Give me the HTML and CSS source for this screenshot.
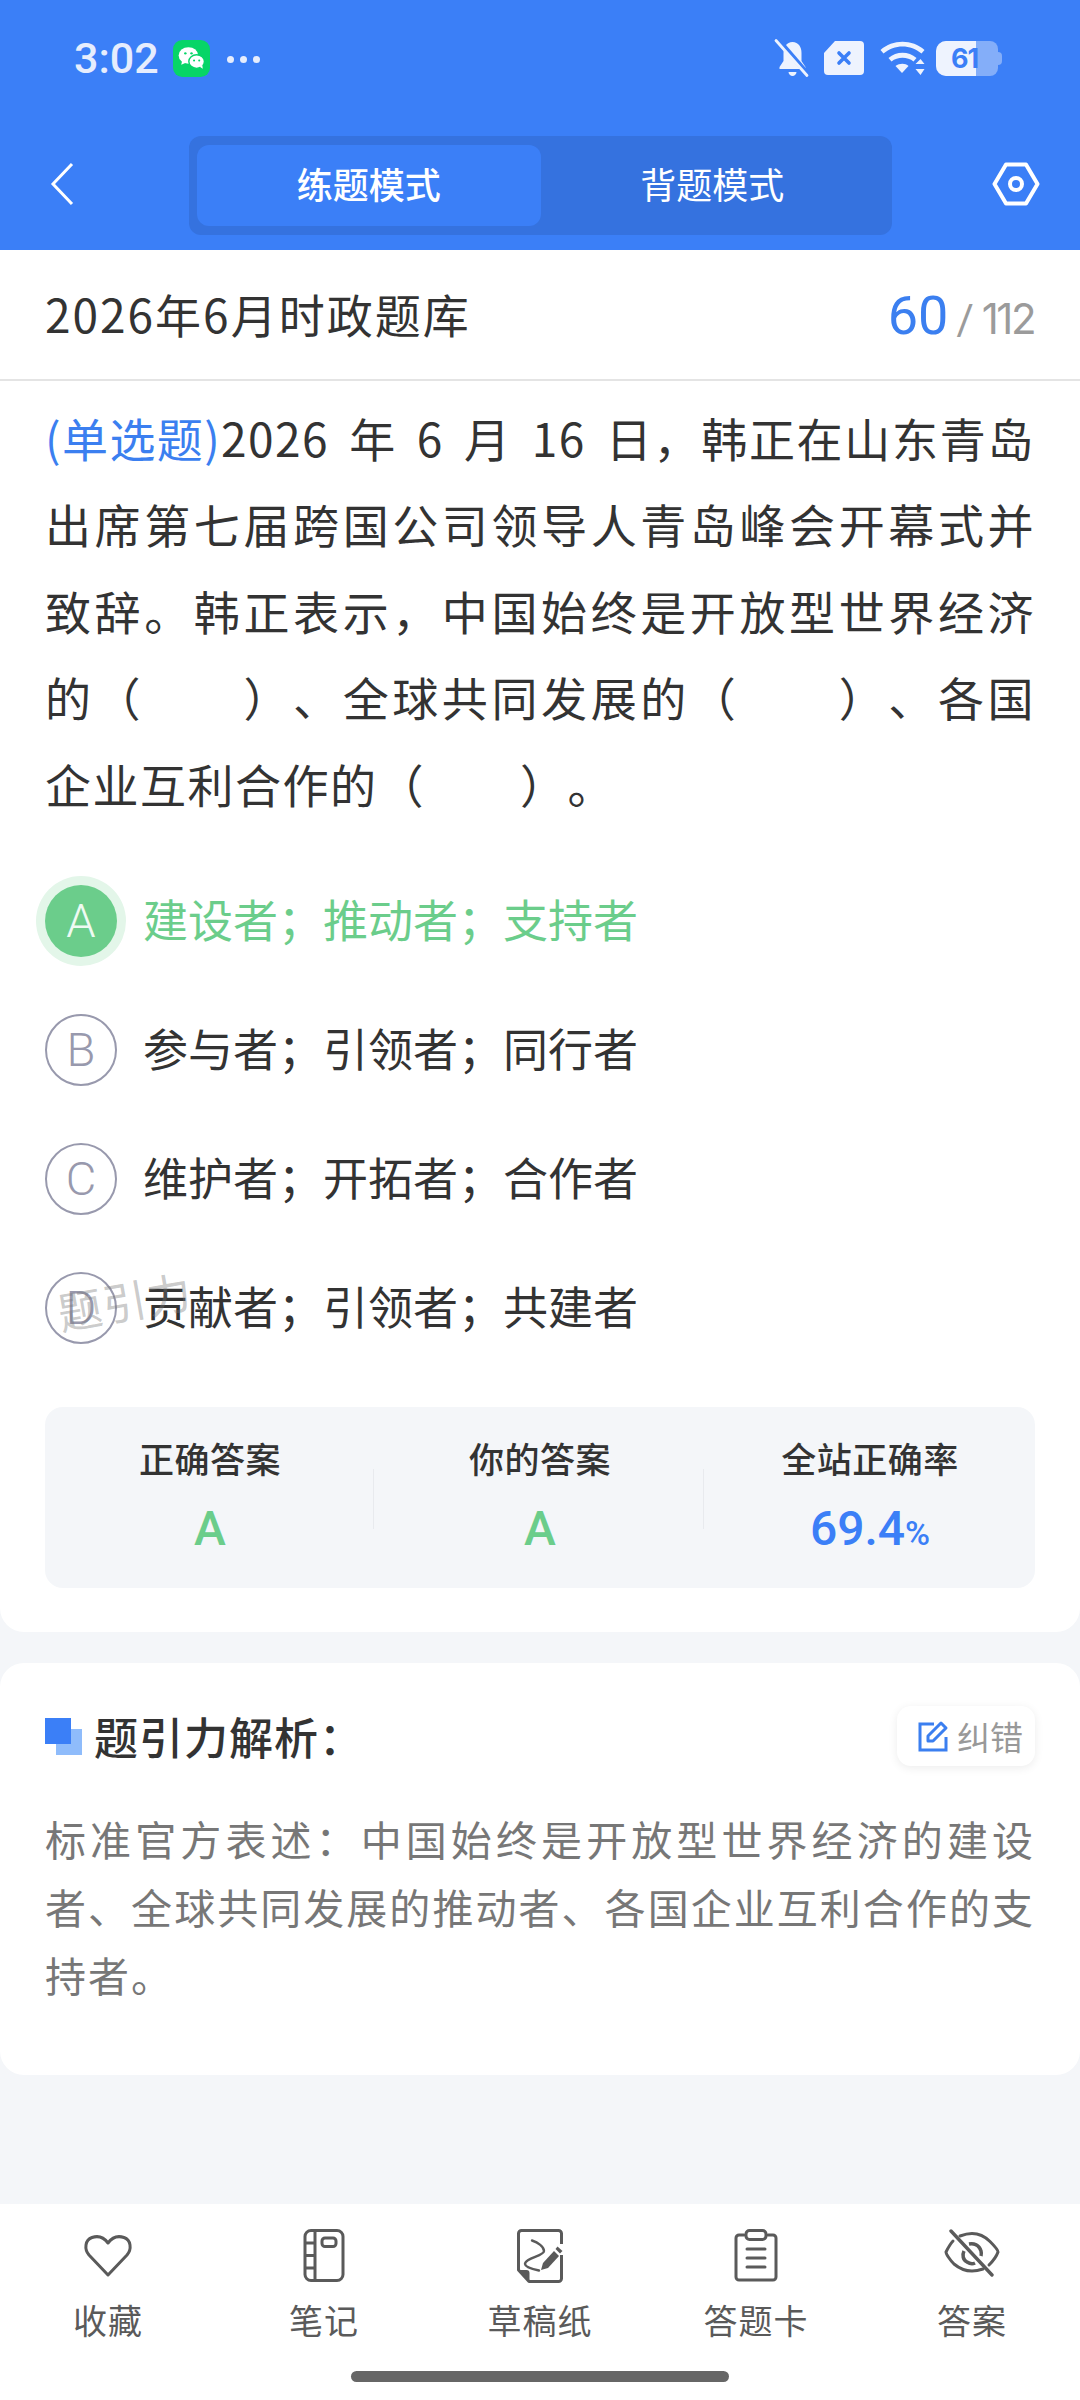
FILE: index.html
```html
<!DOCTYPE html>
<html lang="zh">
<head>
<meta charset="utf-8">
<title>练题模式</title>
<link rel="stylesheet" href="styles.css">
</head>
<body>
<div class="app">
  <header class="top">
    <div class="status">
      <div class="status-left">
        <span class="time">3:02</span>
        <span class="wechat">
          <svg viewBox="0 0 36 36" width="37" height="37"><rect width="36" height="36" rx="9" fill="#07d567"/><ellipse cx="15" cy="15" rx="9.5" ry="8" fill="#fff"/><path d="M9 20l-1 4 5-2z" fill="#fff"/><ellipse cx="23" cy="21" rx="7.6" ry="6.6" fill="#fff" stroke="#07d567" stroke-width="1.4"/><path d="M26 26l3 2-.6-4z" fill="#fff"/><circle cx="12" cy="13" r="1.2" fill="#07d567"/><circle cx="18" cy="13" r="1.2" fill="#07d567"/><circle cx="20.500" cy="20" r="1" fill="#07d567"/><circle cx="25.500" cy="20" r="1" fill="#07d567"/></svg>
        </span>
        <span class="dots"><i></i><i></i><i></i></span>
      </div>
      <div class="status-right">
        <svg class="ic-bell" viewBox="0 0 36 40" width="37" height="40"><path d="M18 4c6 0 9 5 9 11v8l4 6v2H5v-2l4-6v-8c0-6 3-11 9-11z" fill="#eef3fe"/><path d="M14 34h8c0 2-2 4-4 4s-4-2-4-4z" fill="#eef3fe"/><path d="M3 1l31 36" stroke="#3b7ff7" stroke-width="5"/><path d="M1.500 2.500l31 35" stroke="#eef3fe" stroke-width="2.800" stroke-linecap="round"/></svg>
        <svg class="ic-sim" viewBox="0 0 42 36" width="44" height="36"><path d="M12 1h25a4 4 0 0 1 4 4v26a4 4 0 0 1-4 4H5a4 4 0 0 1-4-4V13z" fill="#eef3fe"/><path d="M16 13l10 10M26 13L16 23" stroke="#3b7ff7" stroke-width="3.600" stroke-linecap="round"/></svg>
        <svg class="ic-wifi" viewBox="0 0 46 36" width="49" height="36"><path d="M1 10c12-11 32-11 44 0l-3 3.500C31 4 15 4 4 13.500z" fill="#eef3fe"/><path d="M9 18c8-7 20-7 28 0l-3 3.500c-6-5-16-5-22 0z" fill="#eef3fe"/><path d="M16 26c4-3 10-3 13 0l-6.500 7z" fill="#eef3fe"/><path d="M41 19l4 5h-9zM41 35l4-6h-9z" fill="#eef3fe"/></svg>
        <span class="battery"><span class="battery-fill"></span><span class="battery-num">61</span><span class="battery-tip"></span></span>
      </div>
    </div>
    <nav class="nav">
      <svg class="back" viewBox="0 0 24 44" width="24" height="44"><path d="M22 2L3 22l19 20" fill="none" stroke="#fff" stroke-width="3"/></svg>
      <div class="seg">
        <div class="seg-item active">练题模式</div>
        <div class="seg-item">背题模式</div>
      </div>
      <svg class="gear" viewBox="0 0 48 44" width="48" height="44"><path d="M14 2.500h20L45.500 22 34 41.500H14L2.500 22z" fill="none" stroke="#fff" stroke-width="4" stroke-linejoin="round"/><circle cx="24" cy="22" r="6" fill="none" stroke="#fff" stroke-width="4"/></svg>
    </nav>
  </header>

  <main class="main">
    <section class="card question">
      <div class="qhead">
        <h1 class="qtitle">2026年6月时政题库</h1>
        <div class="count"><span class="cur">60</span><span class="sep">/</span><span class="tot">112</span></div>
      </div>
      <div class="qbody">
        <p class="stem"><span class="qtype">(单选题)</span>2026 年 6 月 16 日，韩正在山东青岛出席第七届跨国公司领导人青岛峰会开幕式并致辞。韩正表示，中国始终是开放型世界经济的（　　）、全球共同发展的（　　）、各国企业互利合作的（　　）。</p>
        <ul class="options">
          <li class="option right"><span class="mark">A</span><span class="otext">建设者；推动者；支持者</span></li>
          <li class="option"><span class="mark">B</span><span class="otext">参与者；引领者；同行者</span></li>
          <li class="option"><span class="mark">C</span><span class="otext">维护者；开拓者；合作者</span></li>
          <li class="option"><span class="mark">D</span><span class="otext">贡献者；引领者；共建者</span><span class="watermark">题引力</span></li>
        </ul>
        <div class="stats">
          <div class="stat"><div class="stat-label">正确答案</div><div class="stat-val green">A</div></div>
          <div class="stat"><div class="stat-label">你的答案</div><div class="stat-val green">A</div></div>
          <div class="stat"><div class="stat-label">全站正确率</div><div class="stat-val blue">69.4<small>%</small></div></div>
        </div>
      </div>
    </section>

    <section class="card analysis">
      <div class="ahead">
        <div class="atitle">
          <span class="squares"><i></i><b></b></span>
          <h2>题引力解析：</h2>
        </div>
        <button class="fix">
          <svg viewBox="0 0 32 32" width="32" height="32"><path d="M17 4H3v26h26V17" fill="none" stroke="#3b7ff0" stroke-width="3"/><path d="M11 16L24 3l5 5-13 13h-5z" fill="none" stroke="#3b7ff0" stroke-width="3" stroke-linejoin="round"/></svg>
          <span>纠错</span>
        </button>
      </div>
      <p class="atext">标准官方表述：中国始终是开放型世界经济的建设者、全球共同发展的推动者、各国企业互利合作的支持者。</p>
    </section>
  </main>

  <footer class="tabs">
    <div class="tab-row">
      <div class="tab">
        <svg viewBox="0 0 54 54" width="54" height="54"><path d="M27 46L8 26C3 20 4 11 11 8.500c6-2 12 0 16 5.500 4-5.500 10-7.500 16-5.500C50 11 51 20 46 26z" fill="none" stroke="#5a5a5a" stroke-width="3" stroke-linejoin="round"/></svg>
        <span>收藏</span>
      </div>
      <div class="tab">
        <svg viewBox="0 0 54 54" width="54" height="54"><rect x="8" y="1.500" width="38" height="50" rx="6" fill="none" stroke="#5a5a5a" stroke-width="3"/><path d="M18 2v49M8 14h10M8 26.500h10M8 39h10" fill="none" stroke="#5a5a5a" stroke-width="3"/><rect x="25" y="9" width="14" height="8.500" rx="3" fill="none" stroke="#5a5a5a" stroke-width="3"/></svg>
        <span>笔记</span>
      </div>
      <div class="tab">
        <svg viewBox="0 0 54 54" width="54" height="54"><path d="M48.500 26v23.500a3 3 0 0 1-3 3H16L5.500 41V4.500a3 3 0 0 1 3-3h37a3 3 0 0 1 3 3V15" fill="none" stroke="#5a5a5a" stroke-width="3" stroke-linejoin="round"/><path d="M5.500 41h8a3 3 0 0 1 3 3v8.500z" fill="#5a5a5a"/><path d="M19 11.500c6 2 12 6 12 10.500 0 5-19 7-19 13 0 3 7 5 14 6.500" fill="none" stroke="#5a5a5a" stroke-width="2.400" stroke-linecap="round"/><path d="M28 41l2-7 11-12 5 5-11 12z" fill="#5a5a5a"/><path d="M42.500 20l2-2.500 5 4.500-2.500 2.500z" fill="#5a5a5a"/></svg>
        <span>草稿纸</span>
      </div>
      <div class="tab">
        <svg viewBox="0 0 54 54" width="54" height="54"><path d="M15 6H10a3 3 0 0 0-3 3v39a3 3 0 0 0 3 3h34a3 3 0 0 0 3-3V9a3 3 0 0 0-3-3h-5" fill="none" stroke="#5a5a5a" stroke-width="3" stroke-linecap="round"/><rect x="17" y="1.500" width="20" height="9" rx="3.500" fill="none" stroke="#5a5a5a" stroke-width="3"/><path d="M18 20h18M18 29h18M18 38h18" stroke="#5a5a5a" stroke-width="3" stroke-linecap="round"/></svg>
        <span>答题卡</span>
      </div>
      <div class="tab">
        <svg viewBox="0 0 56 54" width="56" height="54"><path d="M9 12c-3 3-5 7-7 11 0 2 4 8 8 12 6 5 12 7 18 7 4 0 8-1 11-2M16 7c4-1.500 8-2.500 12-2.500 6 0 13 3 18 8 4 4 8 8 8 10.500-1 3-5 9-9 13" fill="none" stroke="#5a5a5a" stroke-width="3" stroke-linecap="round"/><path d="M25 15c5-1 10 1 12 7 .5 2 .5 3 0 5M20 22c-2 4-1 9 3 11 3 2 6 2 8 1" fill="none" stroke="#5a5a5a" stroke-width="3.500"/><path d="M7 2l41 44" stroke="#5a5a5a" stroke-width="3.400" stroke-linecap="round"/></svg>
        <span>答案</span>
      </div>
    </div>
    <div class="home"></div>
  </footer>
</div>
</body>
</html>
```
FILE: styles.css
```css
* { box-sizing: border-box; }
html, body { margin: 0; padding: 0; }
body { font-family: "Noto Sans CJK SC", "Noto Sans", sans-serif; background: #f4f6f9; text-spacing-trim: space-all; }
h1, h2, p, ul { margin: 0; padding: 0; }
.app { width: 1080px; height: 2400px; display: flex; flex-direction: column; background: #f4f6f9; overflow: hidden; }

.top { height: 250px; background: #3b7ff7; flex: none; }
.status { height: 118px; padding: 38px 78px 0 74px; display: flex; justify-content: space-between; align-items: flex-start; }
.status-left { display: flex; align-items: center; height: 40px; }
.time { font-family: Roboto, sans-serif; font-weight: 500; font-size: 43px; color: #e6edfd; }
.wechat { width: 37px; height: 37px; margin-left: 14px; display: block; }
.wechat svg { display: block; }
.dots { display: flex; gap: 6px; margin: 2px 0 0 17px; }
.dots i { width: 7px; height: 7px; border-radius: 50%; background: #e6edfd; }
.status-right { display: flex; align-items: center; height: 40px; }
.ic-sim { margin-left: 11px; }
.ic-wifi { margin-left: 12px; }
.battery { position: relative; width: 62px; height: 35px; margin: 0 4px 0 9px; background: #84aef9; border-radius: 10px 8px 8px 10px; }
.battery-fill { position: absolute; left: 0; top: 0; bottom: 0; width: 40px; background: #eef3fe; border-radius: 10px 0 0 10px; }
.battery-num { position: absolute; left: 15px; top: 0; font: 700 27px/35px Inter, sans-serif; color: #3b7ff7; letter-spacing: -1px; }
.battery-tip { position: absolute; right: -4px; top: 11px; width: 4px; height: 13px; background: #84aef9; border-radius: 0 4px 4px 0; }

.nav { height: 132px; display: flex; align-items: flex-start; padding-left: 50px; position: relative; }
.back { margin-top: 44px; flex: none; }
.seg { width: 703px; height: 99px; margin: 18px 0 0 115px; background: #3572df; border-radius: 12px; padding: 9px 8px; display: flex; }
.seg-item { flex: 1; height: 81px; border-radius: 12px; display: flex; align-items: center; justify-content: center; color: #fff; font-size: 36px; padding-bottom: 5px; }
.seg-item.active { background: #3b7ff7; font-weight: 500; }
.gear { margin: 44px 0 0 100px; flex: none; }

.main { flex: 1; min-height: 0; }
.card { background: #fff; }
.question { height: 1382px; border-radius: 0 0 24px 24px; }
.qhead { height: 131px; border-bottom: 2px solid #e4e4e4; padding: 0 45px; display: flex; align-items: center; justify-content: space-between; }
.qtitle { font-weight: 400; font-size: 46px; color: #333; margin-top: -4px; letter-spacing: 2px; }
.count { display: flex; align-items: baseline; color: #9b9b9b; margin-top: 2px; font-family: Roboto, sans-serif; }
.cur { font-size: 54px; color: #3b7ff0; }
.sep { font-size: 42px; margin: 0 8px 0 8px; }
.tot { font: 400 42px Inter, sans-serif; letter-spacing: -2.500px; margin-right: 1px; }

.qbody { padding: 0 45px; }
.stem { font-size: 46px; line-height: 86.4px; color: #333; text-align: justify; margin-top: 13px; letter-spacing: 1.500px; word-spacing: 8px; }
.qtype { color: #3b7ff0; letter-spacing: 1.200px; }
.options { list-style: none; margin-top: 28px; }
.option { height: 129px; display: flex; align-items: center; gap: 26px; position: relative; }
.mark { width: 72px; height: 72px; flex: none; margin-top: 4px; border-radius: 50%; border: 2px solid #9899ad; color: #9899ad; display: flex; align-items: center; justify-content: center; font-family: Roboto, sans-serif; font-weight: 300; font-size: 47px; }
.otext { font-size: 45px; color: #333; }
.right .mark { background: #6bcd8b; border: 0; color: #eefaf2; box-shadow: 0 0 0 9px #e3f6e9; }
.right .otext { color: #6bcd8b; }
.watermark { position: absolute; left: 12px; top: 27px; font-size: 44px; color: rgba(120,120,120,.4); transform: rotate(-10deg); letter-spacing: 1px; pointer-events: none; }

.stats { margin-top: 37px; height: 181px; background: #f4f6f9; border-radius: 18px; display: grid; grid-template-columns: repeat(3, 1fr); padding-top: 26px; }
.stat { text-align: center; position: relative; }
.stat + .stat::before { content: ""; position: absolute; left: -2px; top: 36px; height: 60px; border-left: 1px solid #e8eaee; }
.stat-label { font-size: 35px; line-height: 50px; font-weight: 500; color: #333; letter-spacing: .5px; }
.stat-val { font: 500 48px/62px Roboto, sans-serif; margin-top: 15px; }
.green { color: #6bcd8b; }
.blue { color: #3b7ff7; }
.stat-val small { font-size: 34px; }

.analysis { margin-top: 31px; height: 412px; border-radius: 24px; padding: 0 45px; }
.ahead { height: 146px; display: flex; align-items: center; justify-content: space-between; }
.atitle { display: flex; align-items: center; gap: 12px; }
.atitle h2 { font-size: 44px; font-weight: 500; color: #333; letter-spacing: 1px; }
.squares { position: relative; width: 37px; height: 37px; display: block; }
.squares i { position: absolute; left: 0; top: 0; width: 26px; height: 26px; background: #3b7ff7; z-index: 1; }
.squares b { position: absolute; right: 0; bottom: 0; width: 26px; height: 26px; background: #8fbcfb; }
.fix { width: 138px; height: 60px; border: 0; border-radius: 14px; background: #fff; box-shadow: 0 2px 10px rgba(0,0,0,.08); display: flex; align-items: center; justify-content: center; gap: 8px; padding: 0 0 0 8px; font-family: inherit; }
.fix svg { display: block; }
.fix span { font-size: 33px; color: #999; }
.atext { font-size: 41px; line-height: 68px; color: #777; letter-spacing: 2px; margin-top: -5px; text-align: justify; }

.tabs { height: 196px; background: #fff; flex: none; position: relative; }
.tab-row { display: grid; grid-template-columns: repeat(5, 216px); padding-top: 25px; }
.tab { display: flex; flex-direction: column; align-items: center; }
.tab svg { display: block; }
.tab span { font-size: 34px; line-height: 48px; color: #5a5a5a; margin-top: 13px; letter-spacing: 1px; }
.home { position: absolute; left: 351px; top: 167px; width: 378px; height: 11px; border-radius: 6px; background: #666; }
```
